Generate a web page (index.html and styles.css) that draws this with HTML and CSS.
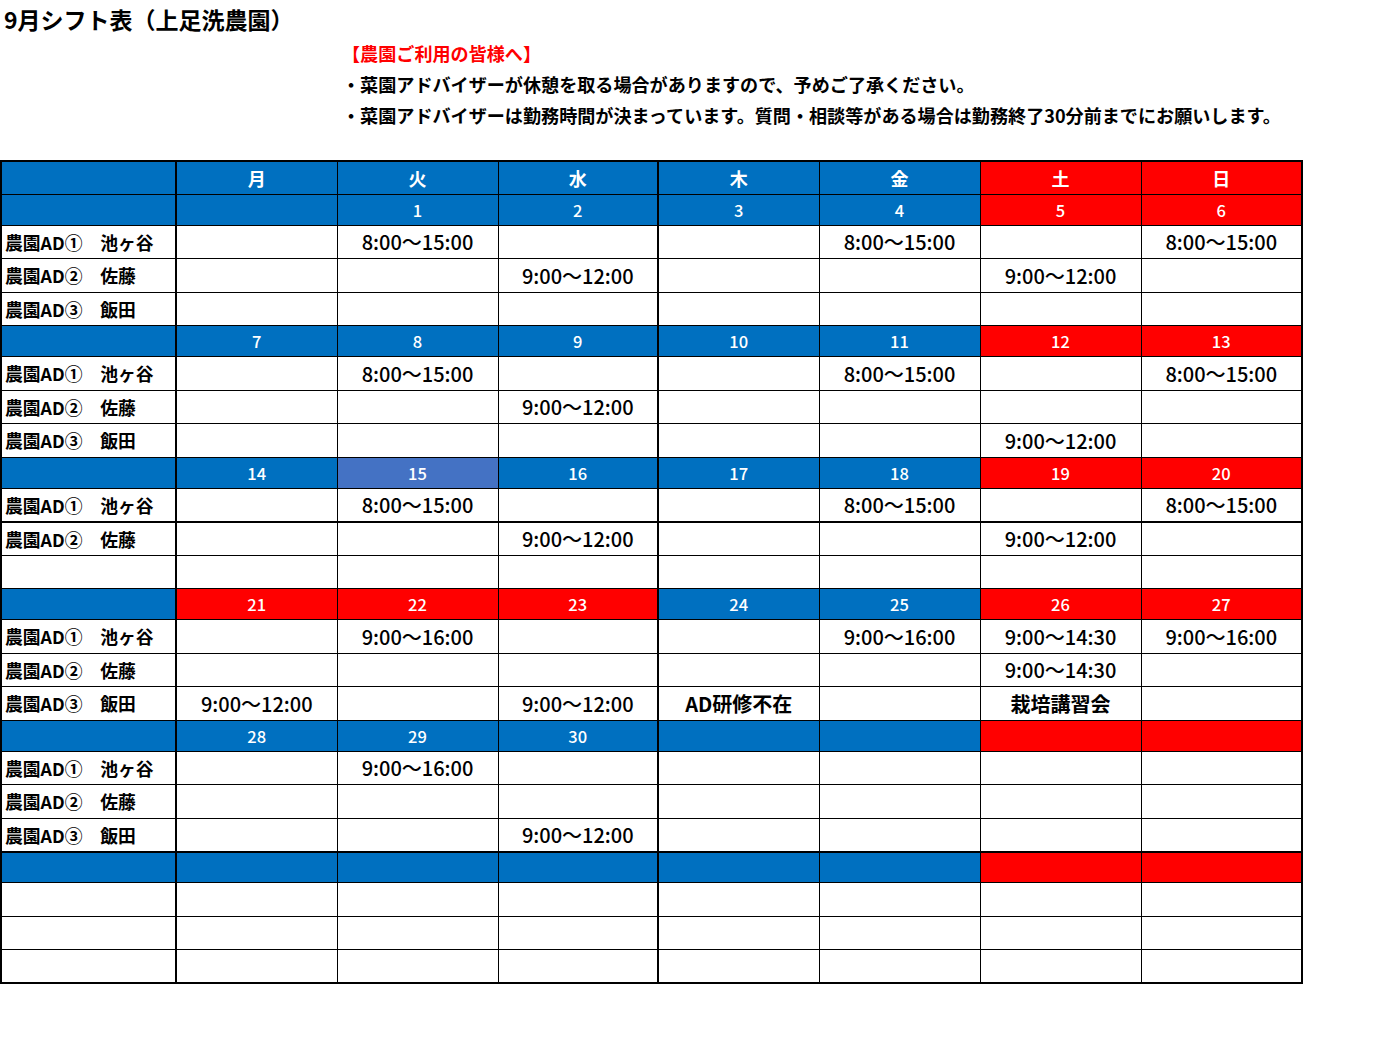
FILE: index.html
```html
<!DOCTYPE html>
<html lang="ja">
<head>
<meta charset="utf-8">
<title>9月シフト表（上足洗農園）</title>
<link rel="stylesheet" href="styles.css">
</head>
<body>
<h1 class="title">9月シフト表（上足洗農園）</h1>
<div class="notice">
  <p class="notice-head">【農園ご利用の皆様へ】</p>
  <p>・菜園アドバイザーが休憩を取る場合がありますので、予めご了承ください。</p>
  <p>・菜園アドバイザーは勤務時間が決まっています。質問・相談等がある場合は勤務終了30分前までにお願いします。</p>
</div>
<table class="shift">
  <colgroup>
    <col class="c-name"><col class="c-day"><col class="c-day"><col class="c-narrow"><col class="c-day"><col class="c-day"><col class="c-day"><col class="c-day">
  </colgroup>
  <tr class="head">
    <td class="b thick-r"></td><td class="b">月</td><td class="b">火</td><td class="b thick-r">水</td><td class="b">木</td><td class="b">金</td><td class="r">土</td><td class="r">日</td>
  </tr>
  <!-- week 1 -->
  <tr class="date">
    <td class="b thick-r"></td><td class="b"></td><td class="b">1</td><td class="b thick-r">2</td><td class="b">3</td><td class="b">4</td><td class="r">5</td><td class="r">6</td>
  </tr>
  <tr class="data">
    <td class="name thick-r">農園AD①　池ヶ谷</td><td></td><td>8:00～15:00</td><td class="thick-r"></td><td></td><td>8:00～15:00</td><td></td><td>8:00～15:00</td>
  </tr>
  <tr class="data">
    <td class="name thick-r">農園AD②　佐藤</td><td></td><td></td><td class="thick-r">9:00～12:00</td><td></td><td></td><td>9:00～12:00</td><td></td>
  </tr>
  <tr class="data">
    <td class="name thick-r">農園AD③　飯田</td><td></td><td></td><td class="thick-r"></td><td></td><td></td><td></td><td></td>
  </tr>
  <!-- week 2 -->
  <tr class="date">
    <td class="b thick-r"></td><td class="b">7</td><td class="b">8</td><td class="b thick-r">9</td><td class="b">10</td><td class="b">11</td><td class="r">12</td><td class="r">13</td>
  </tr>
  <tr class="data">
    <td class="name thick-r">農園AD①　池ヶ谷</td><td></td><td>8:00～15:00</td><td class="thick-r"></td><td></td><td>8:00～15:00</td><td></td><td>8:00～15:00</td>
  </tr>
  <tr class="data">
    <td class="name thick-r">農園AD②　佐藤</td><td></td><td></td><td class="thick-r">9:00～12:00</td><td></td><td></td><td></td><td></td>
  </tr>
  <tr class="data">
    <td class="name thick-r">農園AD③　飯田</td><td></td><td></td><td class="thick-r"></td><td></td><td></td><td>9:00～12:00</td><td></td>
  </tr>
  <!-- week 3 -->
  <tr class="date">
    <td class="b thick-r"></td><td class="b">14</td><td class="lb">15</td><td class="b thick-r">16</td><td class="b">17</td><td class="b">18</td><td class="r">19</td><td class="r">20</td>
  </tr>
  <tr class="data">
    <td class="name thick-r">農園AD①　池ヶ谷</td><td></td><td>8:00～15:00</td><td class="thick-r"></td><td></td><td>8:00～15:00</td><td></td><td>8:00～15:00</td>
  </tr>
  <tr class="data thick-t">
    <td class="name thick-r">農園AD②　佐藤</td><td></td><td></td><td class="thick-r">9:00～12:00</td><td></td><td></td><td>9:00～12:00</td><td></td>
  </tr>
  <tr class="data">
    <td class="name thick-r"></td><td></td><td></td><td class="thick-r"></td><td></td><td></td><td></td><td></td>
  </tr>
  <!-- week 4 -->
  <tr class="date">
    <td class="b thick-r"></td><td class="r">21</td><td class="r">22</td><td class="r thick-r">23</td><td class="b">24</td><td class="b">25</td><td class="r">26</td><td class="r">27</td>
  </tr>
  <tr class="data">
    <td class="name thick-r">農園AD①　池ヶ谷</td><td></td><td>9:00～16:00</td><td class="thick-r"></td><td></td><td>9:00～16:00</td><td>9:00～14:30</td><td>9:00～16:00</td>
  </tr>
  <tr class="data">
    <td class="name thick-r">農園AD②　佐藤</td><td></td><td></td><td class="thick-r"></td><td></td><td></td><td>9:00～14:30</td><td></td>
  </tr>
  <tr class="data">
    <td class="name thick-r">農園AD③　飯田</td><td>9:00～12:00</td><td></td><td class="thick-r">9:00～12:00</td><td class="note">AD研修不在</td><td></td><td class="note">栽培講習会</td><td></td>
  </tr>
  <!-- week 5 -->
  <tr class="date">
    <td class="b thick-r"></td><td class="b">28</td><td class="b">29</td><td class="b thick-r">30</td><td class="b"></td><td class="b"></td><td class="r"></td><td class="r"></td>
  </tr>
  <tr class="data">
    <td class="name thick-r">農園AD①　池ヶ谷</td><td></td><td>9:00～16:00</td><td class="thick-r"></td><td></td><td></td><td></td><td></td>
  </tr>
  <tr class="data">
    <td class="name thick-r">農園AD②　佐藤</td><td></td><td></td><td class="thick-r"></td><td></td><td></td><td></td><td></td>
  </tr>
  <tr class="data">
    <td class="name thick-r">農園AD③　飯田</td><td></td><td></td><td class="thick-r">9:00～12:00</td><td></td><td></td><td></td><td></td>
  </tr>
  <!-- week 6 -->
  <tr class="date thick-t">
    <td class="b thick-r"></td><td class="b"></td><td class="b"></td><td class="b thick-r"></td><td class="b"></td><td class="b"></td><td class="r"></td><td class="r"></td>
  </tr>
  <tr class="data">
    <td class="name thick-r"></td><td></td><td></td><td class="thick-r"></td><td></td><td></td><td></td><td></td>
  </tr>
  <tr class="data">
    <td class="name thick-r"></td><td></td><td></td><td class="thick-r"></td><td></td><td></td><td></td><td></td>
  </tr>
  <tr class="data">
    <td class="name thick-r"></td><td></td><td></td><td class="thick-r"></td><td></td><td></td><td></td><td></td>
  </tr>
</table>
</body>
</html>
```

FILE: styles.css
```css
html, body {
  margin: 0;
  padding: 0;
  background: #ffffff;
}

body {
  font-family: "Noto Sans CJK JP", "Noto Sans", sans-serif;
  color: #000000;
}

.title {
  margin: 0;
  padding-left: 4px;
  font-size: 23px;
  font-weight: 700;
  line-height: 38px;
  height: 38px;
}

.notice {
  padding-left: 342px;
  margin-bottom: 29px;
}

.notice p {
  margin: 0;
  font-size: 18.1px;
  font-weight: 700;
  line-height: 31px;
  white-space: nowrap;
}

.notice .notice-head {
  color: #ff0000;
}

.shift {
  border-collapse: collapse;
  table-layout: fixed;
  width: 1301px;
  border: 2px solid #000000;
}

.c-name {
  width: 175px;
}

.c-day {
  width: 161px;
}

.c-narrow {
  width: 160px;
}

.shift td {
  border: 1px solid #000000;
  padding: 0;
  text-align: center;
  vertical-align: middle;
  font-size: 20px;
  font-weight: 500;
  white-space: nowrap;
  overflow: hidden;
}

.shift tr.head {
  height: 33px;
}

.shift tr.date {
  height: 31px;
}

.shift tr.data {
  height: 33.5px;
}

.shift tr.head td {
  color: #ffffff;
  font-size: 18px;
  font-weight: 700;
}

.shift tr.date td {
  color: #ffffff;
  font-size: 16.5px;
  font-weight: 500;
}

.shift td.b {
  background: #0070c0;
}

.shift td.r {
  background: #ff0000;
}

.shift td.lb {
  background: #4472c4;
}

.shift td.name {
  text-align: left;
  padding-left: 3px;
  font-size: 17.8px;
  font-weight: 700;
}

.shift td.note {
  font-weight: 700;
}

.shift td.thick-r {
  border-right-width: 2px;
}

.shift tr.thick-t td {
  border-top-width: 2px;
}
```
